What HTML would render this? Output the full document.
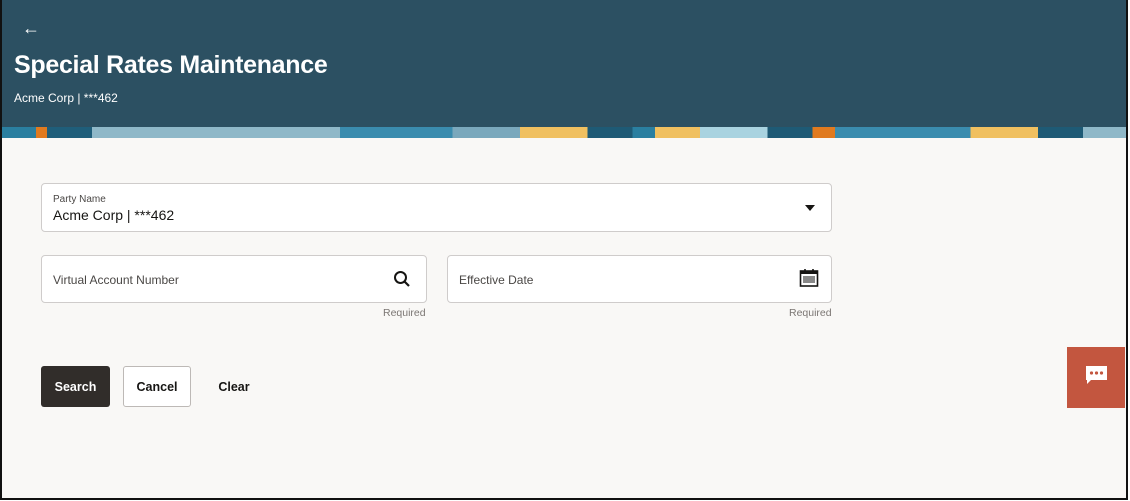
<!DOCTYPE html>
<html><head><style>
*{box-sizing:border-box;margin:0;padding:0}
body{width:1130px;height:501px;background:#fff;font-family:"Liberation Sans",sans-serif;position:relative;overflow:hidden}
.frame{position:absolute;left:0;top:0;width:1128px;height:500px;border:2px solid #111;border-top:none;background:#f9f8f6;overflow:hidden}
.hdr{position:absolute;left:0;top:0;width:1126px;height:127px;background:#2c5062}
.band{position:absolute;left:0;top:127px;width:1126px;height:11px;background:linear-gradient(90deg,#2a7fa0 0 3%,#e07a1f 3% 4%,#1f5e7a 4% 8%,#8fb8c8 8% 30%,#3a8cae 30% 40%,#7aa8bc 40% 46%,#f0c060 46% 52%,#1e5a75 52% 56%,#2a7fa0 56% 58%,#f0c060 58% 62%,#a9d3e0 62% 68%,#1e5a75 68% 72%,#e07a1f 72% 74%,#3a8cae 74% 86%,#f0c060 86% 92%,#1e5a75 92% 96%,#8fb8c8 96%)}
.t{position:absolute;color:#fff}
.box{position:absolute;background:#fff;border:1px solid #cfcccb;border-radius:4px}
.lbl{position:absolute;font-size:12px;color:#4a4745}
.req{position:absolute;font-size:10.5px;color:#7b7673;top:307px}
.btn{position:absolute;top:366px;height:41px;border-radius:3px;font-size:12.5px;font-weight:bold;display:flex;align-items:center;justify-content:center}
</style></head><body>
<div class="frame">
<div class="hdr"></div><div class="band"></div>
<div class="t" style="left:20px;top:18px;font-size:18px">&#8592;</div>
<div class="t" style="left:12px;top:51px;font-size:25px;font-weight:bold;letter-spacing:-0.3px">Special Rates Maintenance</div>
<div class="t" style="left:12px;top:91px;font-size:12px">Acme Corp | ***462</div>

<div class="box" style="left:39px;top:183px;width:791px;height:49px"></div>
<div class="lbl" style="left:51px;top:194px;font-size:10px">Party Name</div>
<div class="lbl" style="left:51px;top:207px;font-size:14px;color:#161513">Acme Corp | ***462</div>
<div style="position:absolute;left:803px;top:205px;border-left:5px solid transparent;border-right:5px solid transparent;border-top:6px solid #161513"></div>

<div class="box" style="left:39px;top:255px;width:386px;height:48px"></div>
<div class="lbl" style="left:51px;top:273px">Virtual Account Number</div>
<svg style="position:absolute;left:391px;top:270px" width="18" height="18" viewBox="0 0 18 18"><circle cx="7.5" cy="7.5" r="5.5" fill="none" stroke="#161513" stroke-width="2"/><path d="M11.5 11.5L16 16" stroke="#161513" stroke-width="2.2"/></svg>
<div class="req" style="left:381px">Required</div>

<div class="box" style="left:445px;top:255px;width:385px;height:48px"></div>
<div class="lbl" style="left:457px;top:273px">Effective Date</div>
<svg style="position:absolute;left:797px;top:268px" width="20" height="20" viewBox="0 0 20 20"><rect x="1.5" y="3" width="17" height="15" fill="none" stroke="#161513" stroke-width="1.6"/><rect x="1.5" y="3" width="17" height="3" fill="#161513"/><path d="M6 1v4M14 1v4" stroke="#161513" stroke-width="1.6"/><rect x="4" y="8" width="12" height="7" fill="#888"/></svg>
<div class="req" style="left:787px">Required</div>

<div class="btn" style="left:39px;width:69px;background:#312d2a;color:#fff">Search</div>
<div class="btn" style="left:121px;width:68px;background:#fff;border:1px solid #bdb9b6;color:#161513">Cancel</div>
<div class="btn" style="left:205px;width:54px;color:#161513">Clear</div>

<div style="position:absolute;left:1065px;top:347px;width:58px;height:61px;background:#c3563f"></div>
<svg style="position:absolute;left:1083px;top:365px" width="24" height="22" viewBox="0 0 24 22"><path d="M1 1h21v14H6l-4 4V15H1z" fill="#fff"/><circle cx="6.5" cy="8" r="1.6" fill="#c3563f"/><circle cx="11.5" cy="8" r="1.6" fill="#c3563f"/><circle cx="16.5" cy="8" r="1.6" fill="#c3563f"/></svg>
</div>
</body></html>
